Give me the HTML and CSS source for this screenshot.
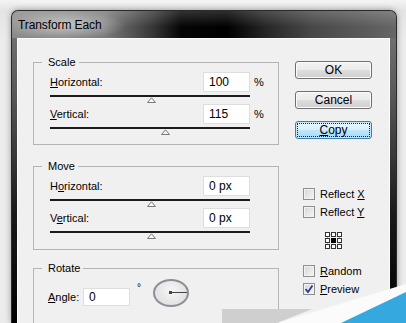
FILE: index.html
```html
<!DOCTYPE html>
<html lang="en">
<head>
  <meta charset="UTF-8" />
  <meta name="viewport" content="width=device-width, initial-scale=1.0"/>
  <title>Transform Each</title>
  <link rel="stylesheet" href="styles.css">
</head>
<body>
  <div class="window">
    <div class="titlebar">Transform Each</div>
    <div class="client">
      <div class="left-col">
        <fieldset class="group">
          <legend>Scale</legend>
          <div class="row">
            <span class="lbl"><u>H</u>orizontal:</span>
            <input class="num" type="text" value="100">
            <span class="unit">%</span>
          </div>
          <div class="slider"><span class="thumb" style="left:50.5%"><svg width="9" height="6"><path d="M0.5 5.5 L4.5 0.8 L8.5 5.5 Z" fill="#f4f4f4" stroke="#7a7a7a"/></svg></span></div>
          <div class="row">
            <span class="lbl"><u>V</u>ertical:</span>
            <input class="num" type="text" value="115">
            <span class="unit">%</span>
          </div>
          <div class="slider"><span class="thumb" style="left:57.5%"><svg width="9" height="6"><path d="M0.5 5.5 L4.5 0.8 L8.5 5.5 Z" fill="#f4f4f4" stroke="#7a7a7a"/></svg></span></div>
        </fieldset>

        <fieldset class="group move">
          <legend>Move</legend>
          <div class="row">
            <span class="lbl">H<u>o</u>rizontal:</span>
            <input class="num" type="text" value="0 px">
          </div>
          <div class="slider"><span class="thumb" style="left:50.5%"><svg width="9" height="6"><path d="M0.5 5.5 L4.5 0.8 L8.5 5.5 Z" fill="#f4f4f4" stroke="#7a7a7a"/></svg></span></div>
          <div class="row">
            <span class="lbl">V<u>e</u>rtical:</span>
            <input class="num" type="text" value="0 px">
          </div>
          <div class="slider"><span class="thumb" style="left:50.5%"><svg width="9" height="6"><path d="M0.5 5.5 L4.5 0.8 L8.5 5.5 Z" fill="#f4f4f4" stroke="#7a7a7a"/></svg></span></div>
        </fieldset>

        <fieldset class="group rotate">
          <legend>Rotate</legend>
          <div class="angle-row">
            <span class="angle-lbl"><u>A</u>ngle:</span>
            <input class="num angle" type="text" value="0">
            <span class="deg">°</span>
            <div class="dial"><span class="dial-hand"></span></div>
          </div>
        </fieldset>
      </div>

      <div class="right-col">
        <button class="btn">OK</button>
        <button class="btn">Cancel</button>
        <button class="btn btn-focus"><u>C</u>opy</button>

        <div class="checks">
          <div class="check"><span class="box"></span><span>Reflect <u>X</u></span></div>
          <div class="check"><span class="box"></span><span>Reflect <u>Y</u></span></div>
          <div class="refpoint">
            <svg width="17" height="17" viewBox="0 0 17 17">
              <g stroke="#8a8a8a" stroke-dasharray="1 1">
                <line x1="4.5" y1="2.5" x2="6.5" y2="2.5"/>
                <line x1="10.5" y1="2.5" x2="12.5" y2="2.5"/>
                <line x1="4.5" y1="14.5" x2="6.5" y2="14.5"/>
                <line x1="10.5" y1="14.5" x2="12.5" y2="14.5"/>
                <line x1="2.5" y1="4.5" x2="2.5" y2="6.5"/>
                <line x1="2.5" y1="10.5" x2="2.5" y2="12.5"/>
                <line x1="14.5" y1="4.5" x2="14.5" y2="6.5"/>
                <line x1="14.5" y1="10.5" x2="14.5" y2="12.5"/>
              </g>
              <g fill="#fff" stroke="#333">
                <rect x="0.5" y="0.5" width="4" height="4"/>
                <rect x="6.5" y="0.5" width="4" height="4"/>
                <rect x="12.5" y="0.5" width="4" height="4"/>
                <rect x="0.5" y="6.5" width="4" height="4"/>
                <rect x="12.5" y="6.5" width="4" height="4"/>
                <rect x="0.5" y="12.5" width="4" height="4"/>
                <rect x="6.5" y="12.5" width="4" height="4"/>
                <rect x="12.5" y="12.5" width="4" height="4"/>
              </g>
              <rect x="6" y="6" width="5" height="5" fill="#000"/>
            </svg>
          </div>
          <div class="check"><span class="box"></span><span><u>R</u>andom</span></div>
          <div class="check"><span class="box checked"><svg width="10" height="10" viewBox="0 0 10 10"><path d="M1.5 5 L4 8 L8.5 1.5" fill="none" stroke="#2c3c8c" stroke-width="1.8"/></svg></span><span><u>P</u>review</span></div>
        </div>
      </div>
    </div>
  </div>

  <svg class="corner-overlay" width="186" height="43" viewBox="220 280 186 43">
    <polygon points="222,309 312,309 277,323 222,323" fill="#cfcfcf"/>
    <polygon points="277,323 406,284 406,323" fill="#fbfbfb"/>
    <polygon points="341,323 406,292 406,323" fill="#35a8e0"/>
  </svg>
</body>
</html>
```

FILE: styles.css
```css
* {
  box-sizing: border-box;
}

body {
  margin: 0;
  width: 406px;
  height: 323px;
  overflow: hidden;
  position: relative;
  background: linear-gradient(180deg, #f4f4f4 0, #e4e4e4 10px, #ececec 40px);
  font-family: "Liberation Sans", Arial, sans-serif;
  font-size: 11px;
  color: #000;
}

.window {
  margin: 10px 0 0 11px;
  width: 386px;
  height: 313px;
  border: 1px solid #2a2a2a;
  border-bottom: none;
  border-radius: 7px 7px 0 0;
  padding: 0 6px 0 5px;
  display: flex;
  flex-direction: column;
  overflow: hidden;
  background: linear-gradient(180deg, #7a7a7a 0, #5a5a5a 25%, #1a1a1a 65%, #000 100%);
  box-shadow: 0 0 6px rgba(0,0,0,0.35);
}

.titlebar {
  height: 27px;
  flex-shrink: 0;
  margin: 0 -6px 0 -5px;
  padding-left: 6px;
  display: flex;
  align-items: center;
  font-size: 12px;
  letter-spacing: -0.1px;
  border-radius: 6px 6px 0 0;
  background:
    radial-gradient(ellipse 62px 15px at 52px 14px, rgba(220,220,220,0.75), rgba(220,220,220,0) 100%),
    linear-gradient(180deg, rgba(255,255,255,0.18), rgba(255,255,255,0) 60%),
    linear-gradient(90deg, #8c8c8c 0%, #7c7c7c 24%, #3a3a3a 36%, #050505 44%, #000 56%, #262626 66%, #474747 78%, #666 100%);
}

.client {
  flex: 1;
  display: flex;
  background: #f0f0f0;
  border: 1px solid #fcfcfc;
  border-bottom: none;
  padding-left: 15px;
}

.left-col {
  width: 246px;
}

.group {
  margin: 16px 0 0;
  border: 1px solid #b4b4b4;
  padding: 3px 13px 8px 16px;
  min-inline-size: 0;
}

.group legend {
  font-size: 11px;
  line-height: 14px;
  margin-left: -8px;
  padding: 0 3px 0 6px;
}

.move {
  margin-top: 14px;
  padding-bottom: 9px;
}

.rotate {
  margin-top: 11px;
  padding-top: 2px;
  height: 80px;
}

.row {
  display: flex;
  align-items: center;
  height: 20px;
}

.lbl {
  width: 153px;
}

.num {
  width: 47px;
  height: 20px;
  border: 1px solid #dedede;
  background: #fff;
  padding: 0 0 0 5px;
  font-family: "Liberation Sans", Arial, sans-serif;
  font-size: 12px;
  color: #000;
  outline: none;
}

.unit {
  margin-left: 4px;
}

.slider {
  position: relative;
  width: 200px;
  height: 12px;
}

.slider::before {
  content: "";
  position: absolute;
  left: 0;
  right: 0;
  top: 3px;
  height: 2px;
  background: #1c1c1c;
}

.thumb {
  position: absolute;
  top: 5px;
  margin-left: -4px;
  line-height: 0;
}

.angle-row {
  display: flex;
  align-items: flex-start;
  margin-left: -2px;
}

.angle-lbl {
  width: 35px;
  margin-top: 11px;
  line-height: 18px;
}

.angle {
  height: 18px;
  margin-top: 11px;
}

.deg {
  margin: 5px 0 0 7px;
  font-size: 10px;
}

.dial {
  position: relative;
  width: 36px;
  height: 28px;
  margin: 2px 0 0 12px;
  border: 2px solid #8e8e98;
  border-radius: 50%;
  background: radial-gradient(circle at 50% 40%, #f6f6f6, #dadada);
}

.dial-hand {
  position: absolute;
  left: 15px;
  top: 11px;
  width: 17px;
  height: 1px;
  background: #444;
}

.dial-hand::before {
  content: "";
  position: absolute;
  left: -1px;
  top: -1px;
  width: 3px;
  height: 3px;
  background: #444;
}

.right-col {
  width: 77px;
  margin-left: 16px;
  padding-top: 22px;
  display: flex;
  flex-direction: column;
}

.btn {
  width: 77px;
  height: 18px;
  margin-bottom: 12px;
  padding: 0;
  border: 1px solid #707070;
  border-radius: 3px;
  background: linear-gradient(180deg, #f3f3f3 0%, #ebebeb 48%, #dddddd 52%, #cfcfcf 100%);
  box-shadow: inset 0 0 0 1px #fbfbfb;
  font-family: "Liberation Sans", Arial, sans-serif;
  font-size: 12px;
  color: #000;
}

.btn-focus {
  border-color: #3c7fb1;
  background: linear-gradient(180deg, #eaf6fd 0%, #d9f0fc 48%, #bee6fd 52%, #a7d9f5 100%);
  box-shadow: inset 0 0 0 1px #c8e8f8;
  outline: 1px dotted #222;
  outline-offset: -3px;
}

.checks {
  margin-top: 34px;
}

.check {
  display: flex;
  align-items: center;
  height: 18px;
}

.box {
  width: 12px;
  height: 12px;
  margin: 0 5px 0 8px;
  border: 1px solid #8e8f8f;
  background: linear-gradient(135deg, #d6d6d6, #f6f6f6);
  box-shadow: inset 0 0 0 1px #f2f2f2;
  display: flex;
  align-items: center;
  justify-content: center;
}

.refpoint {
  height: 41px;
  padding: 11px 0 0 30px;
  line-height: 0;
}

.corner-overlay {
  position: absolute;
  left: 220px;
  top: 280px;
}
```
